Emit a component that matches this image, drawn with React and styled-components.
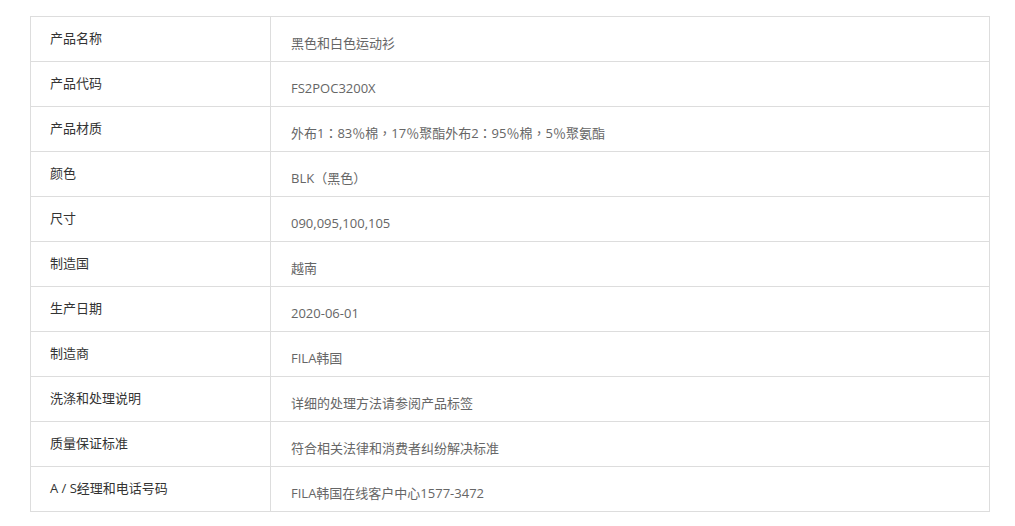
import styled, { createGlobalStyle } from "styled-components";

const GlobalStyle = createGlobalStyle`
    html, body {
        margin: 0;
        padding: 0;
        background: #fff;
    }
    body {
        font-family: "Open Sans", "Noto Sans CJK SC", sans-serif;
    }
`

const Page = styled.div`
    width: 1015px;
    padding: 16px 0 0 30px;
    box-sizing: border-box;
`

const Table = styled.div`
    width: 960px;
    border: 1px solid #dddddd;
    border-bottom: none;
    box-sizing: border-box;
`

const Row = styled.div`
    display: grid;
    grid-template-columns: 240px 1fr;
    height: 45px;
    border-bottom: 1px solid #dddddd;
    box-sizing: border-box;
`

const Label = styled.div`
    border-right: 1px solid #dddddd;
    padding: 11px 0 0 19px;
    font-size: 13px;
    line-height: 20px;
    color: #333333;
`

const Value = styled.div`
    padding: 16px 0 0 20px;
    font-family: "Open Sans", "Noto Sans CJK TC", sans-serif;
    font-size: 13px;
    line-height: 20px;
    color: #666666;
`

const rows = [
    ["产品名称", "黑色和白色运动衫"],
    ["产品代码", "FS2POC3200X"],
    ["产品材质", "外布1：83％棉，17％聚酯外布2：95％棉，5％聚氨酯"],
    ["颜色", "BLK（黑色）"],
    ["尺寸", "090,095,100,105"],
    ["制造国", "越南"],
    ["生产日期", "2020-06-01"],
    ["制造商", "FILA韩国"],
    ["洗涤和处理说明", "详细的处理方法请参阅产品标签"],
    ["质量保证标准", "符合相关法律和消费者纠纷解决标准"],
    ["A / S经理和电话号码", "FILA韩国在线客户中心1577-3472"],
];

export default function App() {
    return (
        <>
            <GlobalStyle />
            <Page>
                <Table>
                    {rows.map(([label, value]) => (
                        <Row key={label}>
                            <Label>{label}</Label>
                            <Value>{value}</Value>
                        </Row>
                    ))}
                </Table>
            </Page>
        </>
    )
}
